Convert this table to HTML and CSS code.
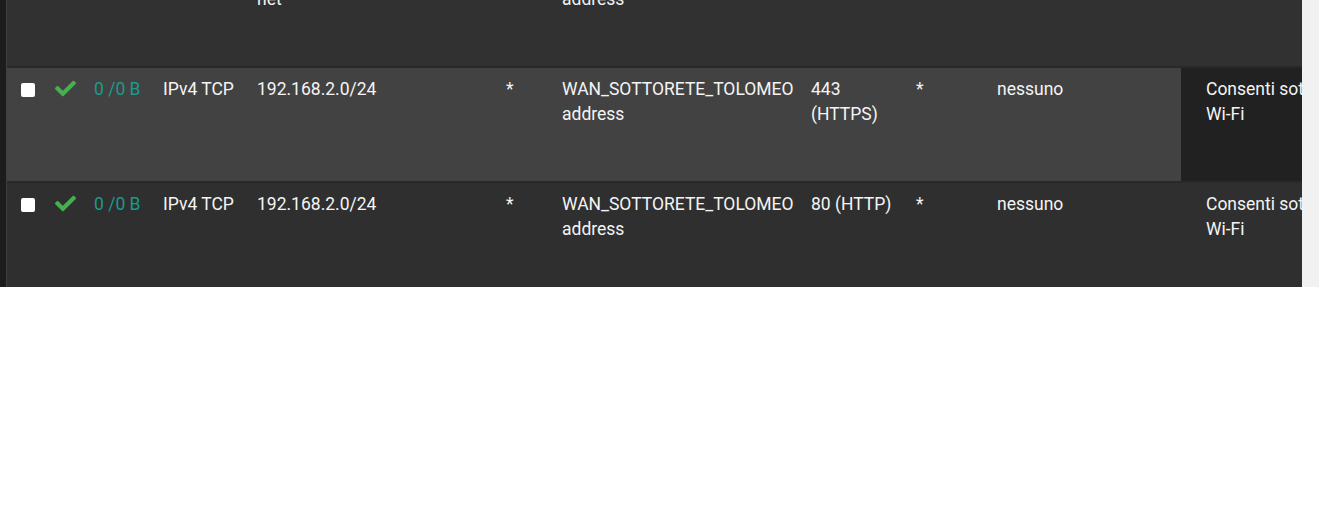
FILE: index.html
```html
<!DOCTYPE html>
<html lang="it">
<head>
<meta charset="utf-8">
<title>Regole firewall</title>
<link rel="stylesheet" href="styles.css">
</head>
<body>
<div class="frame">
  <div class="gutter"></div>
  <div class="table-wrap">
    <table class="rules">
      <colgroup>
        <col class="c-sel"><col class="c-state"><col class="c-count"><col class="c-proto">
        <col class="c-src"><col class="c-port"><col class="c-dst"><col class="c-dport">
        <col class="c-gw"><col class="c-queue"><col class="c-descr">
      </colgroup>
      <tbody>
        <tr class="row row-first">
          <td class="sel"><input type="checkbox" class="chk"></td>
          <td class="state"><svg class="ok" viewBox="0 0 512 512"><path d="M173.898 439.404l-166.4-166.4c-9.997-9.997-9.997-26.206 0-36.204l36.203-36.204c9.997-9.998 26.207-9.998 36.204 0L192 312.69 432.095 72.596c9.997-9.997 26.207-9.997 36.204 0l36.203 36.204c9.997 9.997 9.997 26.206 0 36.204l-294.4 294.401c-9.998 9.997-26.207 9.997-36.204-.001z"/></svg></td>
          <td class="count">0 /0 B</td>
          <td>IPv4 TCP</td>
          <td>WIFI_TOLOMEO<br>net</td>
          <td>*</td>
          <td>WAN_SOTTORETE_TOLOMEO<br>address</td>
          <td>53 (DNS)</td>
          <td>*</td>
          <td>nessuno</td>
          <td class="descr">Consenti DNS</td>
        </tr>
        <tr class="row row-hover">
          <td class="sel"><input type="checkbox" class="chk"></td>
          <td class="state"><svg class="ok" viewBox="0 0 512 512"><path d="M173.898 439.404l-166.4-166.4c-9.997-9.997-9.997-26.206 0-36.204l36.203-36.204c9.997-9.998 26.207-9.998 36.204 0L192 312.69 432.095 72.596c9.997-9.997 26.207-9.997 36.204 0l36.203 36.204c9.997 9.997 9.997 26.206 0 36.204l-294.4 294.401c-9.998 9.997-26.207 9.997-36.204-.001z"/></svg></td>
          <td class="count">0 /0 B</td>
          <td>IPv4 TCP</td>
          <td>192.168.2.0/24</td>
          <td>*</td>
          <td>WAN_SOTTORETE_TOLOMEO<br>address</td>
          <td>443<br>(HTTPS)</td>
          <td>*</td>
          <td>nessuno</td>
          <td class="descr descr-dark">Consenti sottorete<br>Wi-Fi</td>
        </tr>
        <tr class="row">
          <td class="sel"><input type="checkbox" class="chk"></td>
          <td class="state"><svg class="ok" viewBox="0 0 512 512"><path d="M173.898 439.404l-166.4-166.4c-9.997-9.997-9.997-26.206 0-36.204l36.203-36.204c9.997-9.998 26.207-9.998 36.204 0L192 312.69 432.095 72.596c9.997-9.997 26.207-9.997 36.204 0l36.203 36.204c9.997 9.997 9.997 26.206 0 36.204l-294.4 294.401c-9.998 9.997-26.207 9.997-36.204-.001z"/></svg></td>
          <td class="count">0 /0 B</td>
          <td>IPv4 TCP</td>
          <td>192.168.2.0/24</td>
          <td>*</td>
          <td>WAN_SOTTORETE_TOLOMEO<br>address</td>
          <td>80 (HTTP)</td>
          <td>*</td>
          <td>nessuno</td>
          <td class="descr">Consenti sottorete<br>Wi-Fi</td>
        </tr>
      </tbody>
    </table>
  </div>
  <div class="scrolltrack"></div>
</div>
</body>
</html>
```

FILE: styles.css
```css
html, body {
  margin: 0;
  padding: 0;
  background: #ffffff;
}

.frame {
  display: flex;
  height: 287px;
  overflow: hidden;
  background: #303030;
}

.gutter {
  width: 6px;
  flex: 0 0 6px;
  background: #1c1c1c;
  border-right: 1px solid #3e3e3e;
}

.table-wrap {
  flex: 1 1 auto;
  overflow: hidden;
  min-width: 0;
}

.scrolltrack {
  flex: 0 0 17px;
  background: #f1f1f1;
}

.rules {
  table-layout: fixed;
  border-collapse: separate;
  border-spacing: 0;
  width: 1413px;
  margin-top: -47px;
  font-family: Roboto, "Liberation Sans", Arial, sans-serif;
  font-size: 17.5px;
  line-height: 25px;
  color: #f4f4f4;
}

.c-sel { width: 38px; }
.c-state { width: 39px; }
.c-count { width: 69px; }
.c-proto { width: 94px; }
.c-src { width: 249px; }
.c-port { width: 56px; }
.c-dst { width: 249px; }
.c-dport { width: 105px; }
.c-gw { width: 81px; }
.c-queue { width: 194px; }
.c-descr { width: 239px; }

.row {
  height: 115px;
  background: #2f2f2f;
}

.row-first {
  background: #313131;
}

.row-hover {
  background: #424242;
}

.row td {
  padding: 9px 10px 8px;
  vertical-align: top;
  white-space: nowrap;
  border-bottom: 2px solid #292929;
}

.row td.sel {
  padding-left: 14px;
  padding-right: 0;
}

.chk {
  -webkit-appearance: none;
  appearance: none;
  display: block;
  width: 14px;
  height: 14px;
  margin: 6px 0 0;
  background: #ffffff;
  border: 0;
  border-radius: 2px;
}

.row td.state {
  padding-left: 10px;
  padding-right: 0;
}

.ok {
  display: block;
  width: 21px;
  height: 21px;
  margin-top: 1px;
  fill: #45b04f;
}

.count {
  color: #1c9a8a;
}

.row td.descr {
  padding-left: 25px;
}

.descr-dark {
  background: #212121;
}
```
